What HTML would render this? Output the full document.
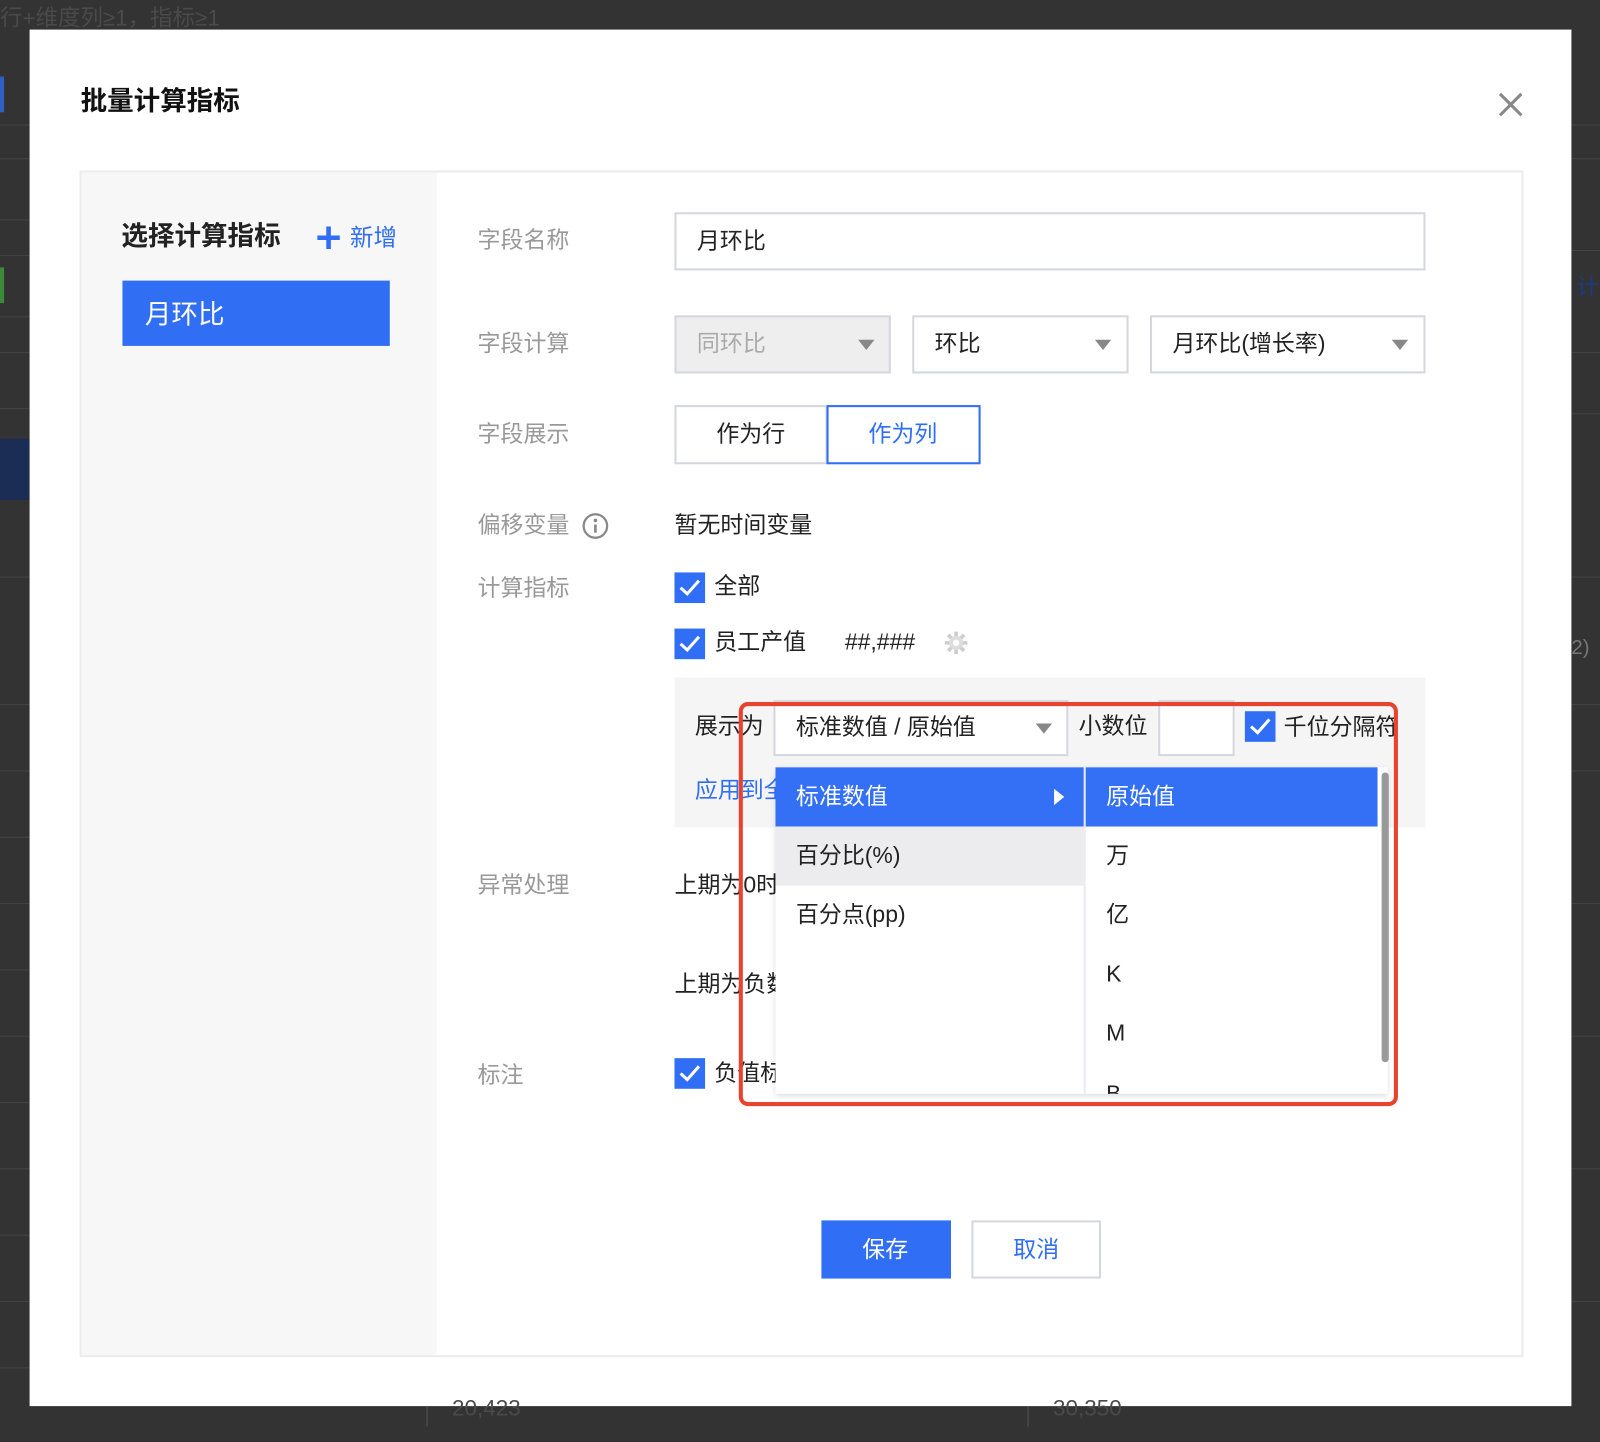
<!DOCTYPE html>
<html><head><meta charset="utf-8"><style>
*{box-sizing:border-box;margin:0;padding:0}
body{width:1600px;height:1442px;overflow:hidden;background:#333;font-family:"Liberation Sans","Noto Sans CJK SC",sans-serif}
#w{position:absolute;left:0;top:0;width:1568px;height:1413px;transform:scale(1.0204);transform-origin:0 0}
.a{position:absolute}
.t{position:absolute;white-space:nowrap;line-height:1;transform:translateY(-50%)}
.lbl{font-size:22.5px;color:#999}
.blk{font-size:22.5px;color:#222}
.box{position:absolute;border:2px solid #d4d7de;background:#fff}
.car{position:absolute;width:0;height:0;border-left:8px solid transparent;border-right:8px solid transparent;border-top:10px solid #888}
.cb{position:absolute;width:30px;height:30px;background:#2f6ef5}
.cb svg{position:absolute;left:4px;top:5px}
.bl{position:absolute;left:0;width:29px;height:1px;background:#444}
.br{position:absolute;left:1540px;width:28px;height:1px;background:#444}
</style></head><body><div id="w">
<div class="t" style="left:0;top:18px;font-size:22px;color:#4a4a4a">行+维度列≥1，指标≥1</div>
<div class="bl" style="top:122px"></div><div class="bl" style="top:155px"></div><div class="bl" style="top:215px"></div><div class="bl" style="top:250px"></div><div class="bl" style="top:310px"></div><div class="bl" style="top:345px"></div><div class="bl" style="top:400px"></div><div class="bl" style="top:565px"></div><div class="bl" style="top:690px"></div><div class="bl" style="top:755px"></div><div class="bl" style="top:820px"></div><div class="bl" style="top:885px"></div><div class="bl" style="top:950px"></div><div class="bl" style="top:1015px"></div><div class="bl" style="top:1080px"></div><div class="bl" style="top:1145px"></div><div class="bl" style="top:1210px"></div><div class="bl" style="top:1275px"></div><div class="bl" style="top:1340px"></div>
<div class="a" style="left:0;top:430px;width:29px;height:60px;background:#1c2d55"></div>
<div class="a" style="left:0;top:75px;width:4px;height:35px;background:#2f5fc4"></div>
<div class="a" style="left:0;top:262px;width:4px;height:35px;background:#3a8a3a"></div>
<div class="br" style="top:122px"></div><div class="br" style="top:155px"></div><div class="br" style="top:245px"></div><div class="br" style="top:345px"></div><div class="br" style="top:405px"></div><div class="br" style="top:565px"></div><div class="br" style="top:690px"></div><div class="br" style="top:755px"></div><div class="br" style="top:885px"></div><div class="br" style="top:1015px"></div><div class="br" style="top:1145px"></div><div class="br" style="top:1275px"></div>
<div class="t" style="left:1545px;top:282px;font-size:22px;color:#1c3a80">计算</div>
<div class="t" style="left:1540px;top:635px;font-size:20px;color:#777">2)</div>

<div class="a" style="left:29px;top:29px;width:1511px;height:1349px;background:#fff"></div>
<div class="t" style="left:79px;top:99px;font-size:26px;font-weight:bold;color:#111">批量计算指标</div>
<svg class="a" style="left:1468px;top:90px" width="25" height="25"><path d="M2 2L23 23M23 2L2 23" stroke="#888" stroke-width="3"/></svg>

<div class="a" style="left:78px;top:167px;width:1415px;height:1163px;border:2px solid #ececec"></div>
<div class="a" style="left:80px;top:169px;width:348px;height:1159px;background:#f7f7f7"></div>
<div class="t" style="left:119px;top:231px;font-size:26px;font-weight:bold;color:#222">选择计算指标</div>
<svg class="a" style="left:310px;top:221px" width="24" height="24"><path d="M12 1V23M1 12H23" stroke="#2f6ef5" stroke-width="4.5"/></svg>
<div class="t" style="left:343px;top:233px;font-size:23px;color:#2f6ef5">新增</div>
<div class="a" style="left:120px;top:275px;width:262px;height:64px;background:#306ef4"></div>
<div class="t" style="left:142px;top:308px;font-size:26px;color:#fff">月环比</div>

<div class="t lbl" style="left:468px;top:236px">字段名称</div>
<div class="t lbl" style="left:468px;top:337px">字段计算</div>
<div class="t lbl" style="left:468px;top:426px">字段展示</div>
<div class="t lbl" style="left:468px;top:515px">偏移变量</div>
<svg class="a" style="left:570px;top:502px" width="27" height="27"><circle cx="13.5" cy="13.5" r="11.5" fill="none" stroke="#888" stroke-width="2.2"/><circle cx="13.5" cy="8" r="1.8" fill="#888"/><path d="M13.5 12V20" stroke="#888" stroke-width="2.6"/></svg>
<div class="t lbl" style="left:468px;top:577px">计算指标</div>
<div class="t lbl" style="left:468px;top:868px">异常处理</div>
<div class="t lbl" style="left:468px;top:1054px">标注</div>

<div class="box" style="left:661px;top:208px;width:736px;height:57px"></div>
<div class="t blk" style="left:683px;top:237px">月环比</div>

<div class="box" style="left:661px;top:309px;width:212px;height:57px;background:#eeeeee"></div>
<div class="t" style="left:683px;top:337px;font-size:22.5px;color:#aaa">同环比</div>
<div class="car" style="left:841px;top:333px"></div>
<div class="box" style="left:894px;top:309px;width:212px;height:57px"></div>
<div class="t blk" style="left:916px;top:337px">环比</div>
<div class="car" style="left:1073px;top:333px"></div>
<div class="box" style="left:1127px;top:309px;width:270px;height:57px"></div>
<div class="t blk" style="left:1149px;top:337px">月环比(增长率)</div>
<div class="car" style="left:1364px;top:333px"></div>

<div class="box" style="left:661px;top:397px;width:150px;height:58px"></div>
<div class="t blk" style="left:702px;top:426px">作为行</div>
<div class="a" style="left:810px;top:397px;width:151px;height:58px;border:2px solid #2f6ef5"></div>
<div class="t" style="left:851px;top:426px;font-size:22.5px;color:#2f6ef5">作为列</div>

<div class="t blk" style="left:661px;top:515px">暂无时间变量</div>

<div class="cb" style="left:661px;top:561px"><svg width="22" height="20"><path d="M2 10L8.5 16L20 3" fill="none" stroke="#fff" stroke-width="3"/></svg></div>
<div class="t blk" style="left:700px;top:575px">全部</div>
<div class="cb" style="left:661px;top:616px"><svg width="22" height="20"><path d="M2 10L8.5 16L20 3" fill="none" stroke="#fff" stroke-width="3"/></svg></div>
<div class="t blk" style="left:700px;top:630px">员工产值</div>
<div class="t blk" style="left:828px;top:630px">##,###</div>
<svg class="a" style="left:925px;top:618px" width="24" height="24"><g stroke="#ccc" stroke-width="3.5"><path d="M12 1V23M1 12H23M4.2 4.2L19.8 19.8M19.8 4.2L4.2 19.8"/></g><circle cx="12" cy="12" r="7" fill="#ddd"/><circle cx="12" cy="12" r="3.2" fill="#fff"/></svg>

<div class="a" style="left:661px;top:664px;width:736px;height:147px;background:#f5f5f5"></div>
<div class="t blk" style="left:681px;top:712px">展示为</div>
<div class="box" style="left:758px;top:686px;width:289px;height:55px"></div>
<div class="t blk" style="left:780px;top:713px">标准数值 / 原始值</div>
<div class="car" style="left:1015px;top:709px"></div>
<div class="t blk" style="left:1057px;top:712px">小数位</div>
<div class="box" style="left:1135px;top:686px;width:75px;height:55px"></div>
<div class="cb" style="left:1220px;top:697px"><svg width="22" height="20"><path d="M2 10L8.5 16L20 3" fill="none" stroke="#fff" stroke-width="3"/></svg></div>
<div class="t blk" style="left:1258px;top:713px">千位分隔符</div>
<div class="t" style="left:681px;top:775px;font-size:22.5px;color:#2f6ef5">应用到全部</div>

<div class="t blk" style="left:661px;top:868px">上期为0时</div>
<div class="t blk" style="left:661px;top:965px">上期为负数</div>
<div class="cb" style="left:661px;top:1037px"><svg width="22" height="20"><path d="M2 10L8.5 16L20 3" fill="none" stroke="#fff" stroke-width="3"/></svg></div>
<div class="t blk" style="left:700px;top:1052px">负值标注</div>

<div class="a" style="left:760px;top:752px;width:600px;height:320px;background:#fff;box-shadow:0 2px 6px rgba(0,0,0,.15)"></div>
<div class="a" style="left:1062px;top:752px;width:2px;height:320px;background:#ececef"></div>
<div class="a" style="left:760px;top:752px;width:302px;height:58px;background:#3370f5"></div>
<div class="a" style="left:1064px;top:752px;width:286px;height:58px;background:#3370f5"></div>
<div class="a" style="left:760px;top:810px;width:302px;height:58px;background:#ececef"></div>
<div class="t" style="left:780px;top:781px;font-size:22.5px;color:#fff">标准数值</div>
<div class="a" style="left:1033px;top:773px;width:0;height:0;border-top:8px solid transparent;border-bottom:8px solid transparent;border-left:10px solid #fff"></div>
<div class="t" style="left:1084px;top:781px;font-size:22.5px;color:#fff">原始值</div>
<div class="t blk" style="left:780px;top:839px">百分比(%)</div>
<div class="t blk" style="left:780px;top:897px">百分点(pp)</div>
<div class="t blk" style="left:1084px;top:839px">万</div>
<div class="t blk" style="left:1084px;top:897px">亿</div>
<div class="t blk" style="left:1084px;top:955px">K</div>
<div class="t blk" style="left:1084px;top:1013px">M</div>
<div class="a" style="left:1084px;top:1061px;height:11px;overflow:hidden;font-size:22px;color:#222;line-height:22px">B</div>
<div class="a" style="left:1354px;top:757px;width:7px;height:284px;border-radius:4px;background:#999"></div>

<div class="a" style="left:724px;top:688px;width:646px;height:396px;border:4px solid #e8432e;border-radius:9px"></div>

<div class="a" style="left:805px;top:1196px;width:127px;height:57px;background:#2f6ef5"></div>
<div class="t" style="left:845px;top:1225px;font-size:22.5px;color:#fff">保存</div>
<div class="box" style="left:952px;top:1196px;width:127px;height:57px"></div>
<div class="t" style="left:993px;top:1225px;font-size:22.5px;color:#2f6ef5">取消</div>

<div class="a" style="left:418px;top:1378px;width:1px;height:20px;background:#555"></div>
<div class="a" style="left:1007px;top:1378px;width:1px;height:20px;background:#555"></div>
<div class="t" style="left:443px;top:1380px;font-size:22px;color:#4a4a4a">20,423</div>
<div class="t" style="left:1032px;top:1380px;font-size:22px;color:#4a4a4a">30,350</div>
</div></body></html>
